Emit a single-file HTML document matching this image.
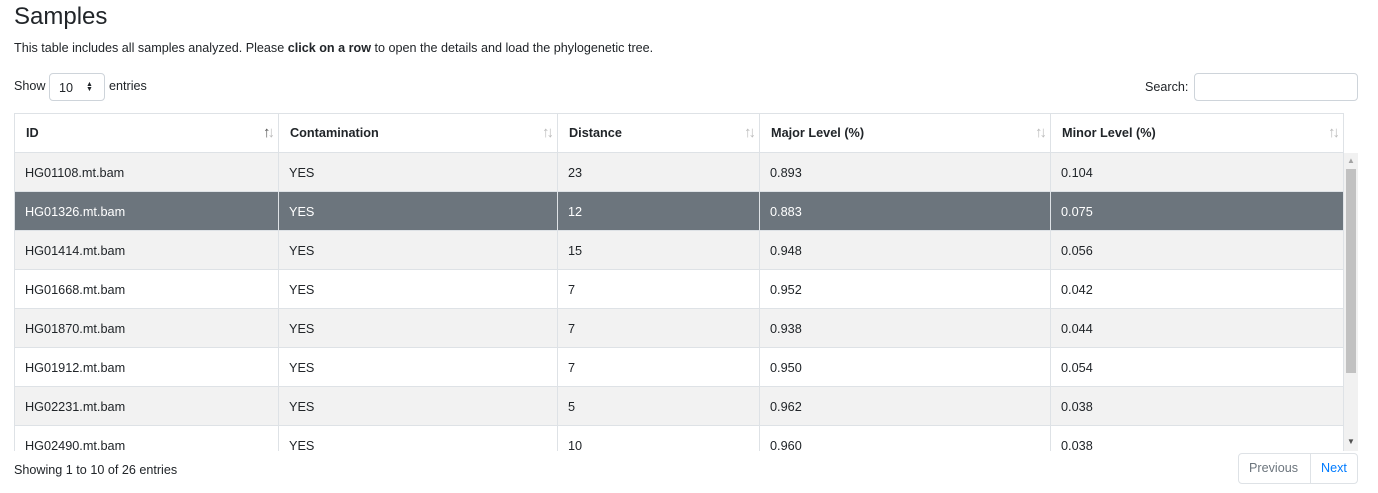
<!DOCTYPE html>
<html><head><style>
body{margin:0;width:1378px;height:493px;overflow:hidden;background:#fff;font-family:"Liberation Sans",sans-serif;color:#212529;font-size:13px;position:relative}
.a{position:absolute}
h1{position:absolute;left:14px;top:3px;margin:0;font-size:24px;font-weight:400}
table{border-collapse:collapse;table-layout:fixed;font-size:12.7px}
td,th{border:1px solid #dee2e6;padding:0 10px;text-align:left;white-space:nowrap}
th{height:38px;font-weight:bold;border-bottom:2px solid #dee2e6;position:relative;padding-left:11px}
th span{position:absolute;right:6px;top:10px;color:#bbb;font-size:15px;font-weight:normal;letter-spacing:-3px}
td{height:37px;padding-top:1px}
tr.o td{background:#f2f2f2}
tr.s td{background:#6c757d;color:#fff}
</style></head><body>
<h1>Samples</h1>
<div class="a" style="left:14px;top:41px;font-size:12.6px">This table includes all samples analyzed. Please <b>click on a row</b> to open the details and load the phylogenetic tree.</div>
<div class="a" style="left:14px;top:79px;font-size:12.6px">Show</div>
<div class="a" style="left:49px;top:73px;width:56px;height:28px;border:1px solid #ced4da;border-radius:4px;box-sizing:border-box;font-size:12.6px;padding:7px 0 0 9px">10<span style="position:absolute;left:36px;top:8px;font-size:7px;line-height:5px">▲<br>▼</span></div>
<div class="a" style="left:109px;top:79px;font-size:12.6px">entries</div>
<div class="a" style="left:1145px;top:80px;font-size:12.6px">Search:</div>
<div class="a" style="left:1194px;top:73px;width:164px;height:28px;border:1px solid #ced4da;border-radius:4px;box-sizing:border-box"></div>
<div class="a" style="left:14px;top:113px;width:1330px">
<table style="width:1330px"><colgroup><col style="width:264px"><col style="width:279px"><col style="width:202px"><col style="width:291px"><col style="width:293px"></colgroup>
<tr><th>ID<span style="color:#555">↑<span style="position:static;color:#bbb">↓</span></span></th><th>Contamination<span>↑↓</span></th><th>Distance<span>↑↓</span></th><th>Major Level (%)<span>↑↓</span></th><th>Minor Level (%)<span>↑↓</span></th></tr>
</table></div>
<div class="a" style="left:14px;top:153px;width:1344px;height:298px;overflow:hidden">
<table style="width:1330px;margin-top:-1px"><colgroup><col style="width:264px"><col style="width:279px"><col style="width:202px"><col style="width:291px"><col style="width:293px"></colgroup>
<tr class="o"><td>HG01108.mt.bam</td><td>YES</td><td>23</td><td>0.893</td><td>0.104</td></tr>
<tr class="s"><td>HG01326.mt.bam</td><td>YES</td><td>12</td><td>0.883</td><td>0.075</td></tr>
<tr class="o"><td>HG01414.mt.bam</td><td>YES</td><td>15</td><td>0.948</td><td>0.056</td></tr>
<tr><td>HG01668.mt.bam</td><td>YES</td><td>7</td><td>0.952</td><td>0.042</td></tr>
<tr class="o"><td>HG01870.mt.bam</td><td>YES</td><td>7</td><td>0.938</td><td>0.044</td></tr>
<tr><td>HG01912.mt.bam</td><td>YES</td><td>7</td><td>0.950</td><td>0.054</td></tr>
<tr class="o"><td>HG02231.mt.bam</td><td>YES</td><td>5</td><td>0.962</td><td>0.038</td></tr>
<tr><td>HG02490.mt.bam</td><td>YES</td><td>10</td><td>0.960</td><td>0.038</td></tr>
</table>
<div class="a" style="left:1330px;top:0;width:14px;height:298px;background:#f1f1f1"></div>
<div class="a" style="left:1332px;top:16px;width:10px;height:204px;background:#c1c1c1"></div>
<div class="a" style="left:1333px;top:3px;font-size:8px;color:#a3a3a3">▲</div>
<div class="a" style="left:1333px;top:284px;font-size:8px;color:#505050">▼</div>
</div>
<div class="a" style="left:14px;top:463px;font-size:12.6px">Showing 1 to 10 of 26 entries</div>
<div class="a" style="left:1238px;top:453px;width:120px;height:31px;border:1px solid #dee2e6;border-radius:4px;box-sizing:border-box;font-size:12.6px">
<span class="a" style="left:10px;top:7px;color:#6c757d">Previous</span>
<span class="a" style="left:71px;top:-1px;width:1px;height:31px;background:#dee2e6"></span>
<span class="a" style="left:82px;top:7px;color:#007bff">Next</span></div>
</body></html>
